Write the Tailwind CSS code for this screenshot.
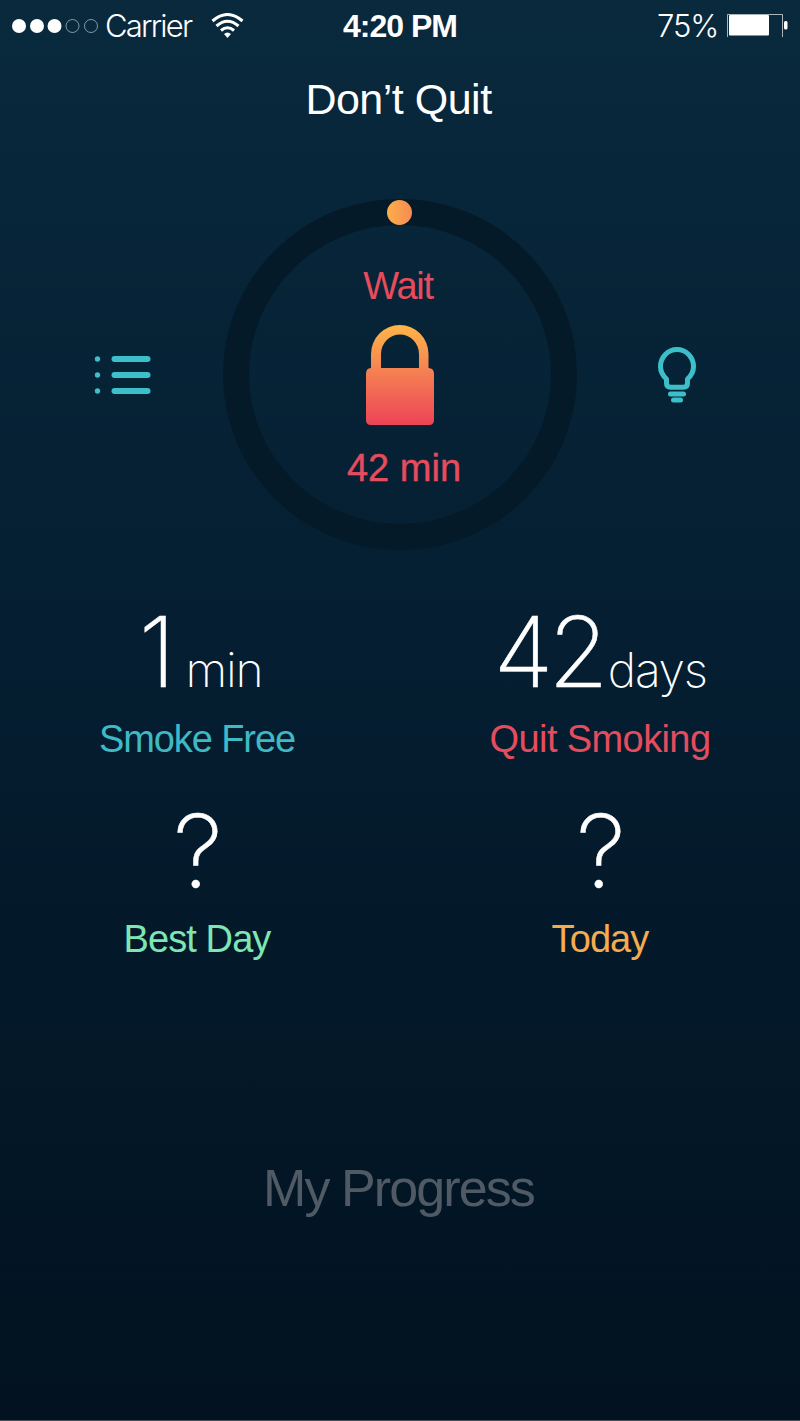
<!DOCTYPE html>
<html lang="en">
<head>
<meta charset="utf-8">
<title>Don’t Quit</title>
<script src="https://cdn.jsdelivr.net/npm/@tailwindcss/browser@4"></script>
</head>
<body class="w-[800px] h-[1421px] overflow-hidden font-['Liberation_Sans',sans-serif] text-white whitespace-nowrap">
<main class="flex flex-col w-full h-full border-b border-[#46505c] bg-linear-to-b from-[#09293d] via-[#051e31] via-45% to-[#021220]">
  <header class="grid grid-cols-3 items-center h-[52px] pl-[12px] pr-[12px] font-['Inter','Liberation_Sans',sans-serif]">
    <div class="flex items-center">
      <svg class="shrink-0" width="88" height="16" viewBox="0 0 88 16"><g fill="#fff"><circle cx="7" cy="8" r="7"/><circle cx="25" cy="8" r="7"/><circle cx="42.500" cy="8" r="7"/></g><g fill="none" stroke="#fff" stroke-opacity=".5"><circle cx="60.500" cy="8" r="6.500"/><circle cx="79" cy="8" r="6.500"/></g></svg>
      <span class="ml-[5px] w-[87px] text-[31px] font-light tracking-[-1.8px]">Carrier</span>
      <svg class="ml-[19px] shrink-0" width="33" height="26" viewBox="0 0 33 26" fill="none" stroke="#fff" stroke-width="3"><path d="M1.500 8Q16.500-5 31.500 8"/><path d="M5.500 13Q16.500 3.500 27.500 13"/><path d="M10 17.500Q16.500 12 23 17.500"/><path d="M16.500 25l-3.500-4q3.500-3 7 0z" fill="#fff" stroke="none"/></svg>
    </div>
    <div class="text-center font-['Liberation_Sans',sans-serif] text-[32px] leading-[46px] font-bold tracking-[-1px]">4:20 PM</div>
    <div class="flex items-center justify-end">
      <span class="text-[31px] font-light tracking-[-1.2px]">75%</span>
      <svg class="ml-[9px]" width="61" height="26" viewBox="0 0 61 26"><path d="M.5 24V1.500H55.500V24" fill="none" stroke="#fff" stroke-opacity=".65"/><rect x="2" y="2" width="40" height="20.500" rx="1" fill="#fff"/><rect x="57" y="8" width="3.500" height="8.500" rx="1.500" fill="#fff"/></svg>
    </div>
  </header>
  <h1 class="h-[94px] leading-[94px] pr-[3px] text-center text-[43px] tracking-[-0.5px]">Don’t Quit</h1>
  <section class="mt-[52px] grid grid-cols-[223px_354px_223px] items-center h-[353px]">
    <svg class="ml-[94px]" width="58" height="42" viewBox="0 0 58 42" fill="#3cbfc8"><circle cx="3.500" cy="5" r="2.700"/><circle cx="3.500" cy="21" r="2.700"/><circle cx="3.500" cy="37" r="2.700"/><rect x="17.500" y="2" width="39" height="6" rx="3"/><rect x="17.500" y="18" width="39" height="6" rx="3"/><rect x="17.500" y="34" width="39" height="6" rx="3"/></svg>
    <div class="relative flex flex-col items-center h-[351px] w-[354px] rounded-[50%] border-[26px] border-[#041a28] self-start mt-px">
      <span class="absolute -top-[25px] left-[138px] size-[25px] rounded-full bg-linear-to-r from-[#fcae4b] to-[#f68b51]"></span>
      <div class="mt-[39px] mr-[4px] leading-[44px] text-[38px] tracking-[-1.3px] text-[#e54c5e]">Wait</div>
      <svg class="mt-[16px]" width="68" height="102" viewBox="0 0 68 102"><defs><linearGradient id="lock" x1="0" y1="0" x2="0" y2="102" gradientUnits="userSpaceOnUse"><stop offset="0" stop-color="#ffb648"/><stop offset=".45" stop-color="#f58252"/><stop offset="1" stop-color="#ed4257"/></linearGradient></defs><path fill="url(#lock)" d="M5 44V30A28.700 29 0 0 1 62.500 30V44Q68 44 68 50V96Q68 101 63 101H5Q0 101 0 96V50Q0 44 5 44ZM15 44H53V30A19 19.500 0 0 0 15 30Z"/></svg>
      <div class="mt-[20px] leading-[44px] text-[38px] [-webkit-text-stroke:0.4px_#e54c5e] text-[#e54c5e] ml-[8px]">42 min</div>
    </div>
    <svg class="ml-[80px]" width="40" height="58" viewBox="0 0 40 58" fill="none" stroke="#3cbfc8" stroke-width="5" stroke-linecap="round" stroke-linejoin="round"><path d="M9.500 33C5 29 3.500 24.500 3.500 20.500A16.500 17 0 0 1 36.500 20.500C36.500 24.500 35 29 30.500 33V37Q30.500 41.300 26.500 41.300H13.500Q9.500 41.300 9.500 37Z"/><path d="M13.500 48H26.500M16.500 54H23.500"/></svg>
  </section>
  <section class="mt-[51px] grid grid-cols-2 text-center">
    <div class="pr-[6px]">
      <div class="flex items-baseline justify-center h-[100px] leading-[100px] pl-[7px] font-['Inter','Liberation_Sans',sans-serif]"><span class="text-[97px] font-extralight [-webkit-text-stroke:0.5px_#fff]">1</span><span class="ml-[10px] text-[48px] font-extralight tracking-[-1.3px]">min</span></div>
      <div class="mt-[15px] leading-[44px] text-[38px] tracking-[-1.1px] text-[#3fb9c4]">Smoke Free</div>
    </div>
    <div>
      <div class="flex items-baseline justify-center h-[100px] leading-[100px] font-['Inter','Liberation_Sans',sans-serif]"><span class="text-[98px] font-extralight [-webkit-text-stroke:0.5px_#fff] tracking-[-5px]">42</span><span class="ml-[4px] text-[48px] font-extralight tracking-[-1.3px]">days</span></div>
      <div class="mt-[15px] leading-[44px] text-[38px] tracking-[-0.6px] text-[#e54c5e]">Quit Smoking</div>
    </div>
    <div class="mt-[39px] pr-[6px]">
      <div class="h-[100px] leading-[102px] pl-[2px] text-[101px] font-['Inter','Liberation_Sans',sans-serif] font-extralight [-webkit-text-stroke:0.5px_#fff]">?</div>
      <div class="mt-[17px] leading-[44px] text-[38px] tracking-[-0.9px] text-[#7fe6b3]">Best Day</div>
    </div>
    <div class="mt-[39px]">
      <div class="h-[100px] leading-[102px] pl-[2px] text-[101px] font-['Inter','Liberation_Sans',sans-serif] font-extralight [-webkit-text-stroke:0.5px_#fff]">?</div>
      <div class="mt-[17px] leading-[44px] text-[38px] tracking-[-0.9px] text-[#f6ab4e]">Today</div>
    </div>
  </section>
  <footer class="mt-[197px] pr-[3px] leading-[60px] text-center text-[52px] tracking-[-1.9px] text-[#505a64]">My Progress</footer>
</main>
</body>
</html>
